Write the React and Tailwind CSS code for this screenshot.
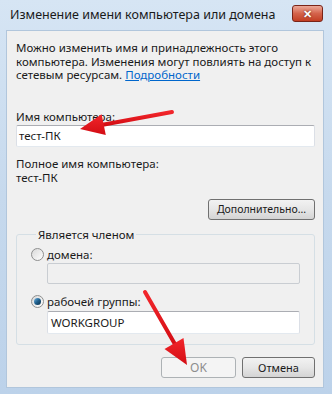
import React from "react";

const font = { fontFamily: '"Noto Sans", "Open Sans", sans-serif' };

const Radio = ({ checked }) => (
  <span className="relative flex h-[13px] w-[13px] items-center justify-center rounded-full border border-[#8e8f8f] bg-gradient-to-br from-[#d9d9d9] to-[#ffffff]">
    {checked && (
      <span className="h-[7px] w-[7px] rounded-full bg-gradient-to-br from-[#6fb6e6] via-[#1e5f8c] to-[#0c2f4a]" />
    )}
  </span>
);

const Button = ({ children, disabled, className = "", size = "text-[11px]" }) => (
  <button
    className={`flex h-[21px] items-center justify-center whitespace-nowrap rounded-[3px] border ${size} ${
      disabled
        ? "border-[#adb2b5] bg-[#f4f4f4] text-[#8d8d8d]"
        : "border-[#707070] bg-gradient-to-b from-[#f2f2f2] via-[#e6e6e6] to-[#d4d4d4] text-[#1a1a1a]"
    } ${className}`}
  >
    {children}
  </button>
);

const Arrows = () => (
  <svg className="pointer-events-none absolute left-0 top-0" width="332" height="394">
    <defs>
      <linearGradient id="ar" x1="0" y1="0" x2="0" y2="1">
        <stop offset="0" stopColor="#f2262b" />
        <stop offset="1" stopColor="#d30d14" />
      </linearGradient>
    </defs>
    <line x1="172" y1="112" x2="100" y2="125.3" stroke="url(#ar)" strokeWidth="4" strokeLinecap="round" />
    <polygon points="80,129 105.8,135 101.6,114.2" fill="url(#ar)" />
    <line x1="145" y1="292" x2="176" y2="346" stroke="url(#ar)" strokeWidth="4" strokeLinecap="round" />
    <polygon points="187,365 183.5,338 164.5,349" fill="url(#ar)" />
  </svg>
);

export default function App() {
  return (
    <div
      style={font}
      className="relative flex h-[394px] w-[332px] flex-col bg-gradient-to-b from-[#d6e5f4] via-[#c6d9ed] to-[#bcd2ea] text-[#1a1a1a]"
    >
      <div className="flex h-[30px] shrink-0 items-center justify-between pl-[10px] pr-[9px]">
        <span className="whitespace-nowrap text-[12.5px] leading-none">
          Изменение имени компьютера или домена
        </span>
        <span className="mb-[3px] flex h-[17px] w-[31px] items-center justify-center rounded-[3px] border border-[#7a2418] bg-gradient-to-b from-[#eba898] via-[#d4634b] to-[#c23e22] text-[11px] font-bold leading-none text-white [text-shadow:0_0_2px_#5a1208]">
          ✕
        </span>
      </div>

      <div className="ml-[6px] mr-[8px] flex flex-1 flex-col border border-[#b1c6dc] bg-[#f0f0f0] pl-[9px] pr-[8px] pt-[10px] text-[11.5px] leading-[13px]">
        <p className="leading-[13.5px]">
          Можно изменить имя и принадлежность этого
          <br />
          компьютера. Изменения могут повлиять на доступ к
          <br />
          сетевым ресурсам.{" "}
          <span className="text-[#0066cc] underline">Подробности</span>
        </p>

        <div className="mt-[28px] leading-[14px]">Имя компьютера:</div>
        <div className="mt-[1px] flex h-[22px] items-center rounded-[2px] border border-[#abadb3] border-b-[#e3e9ef] border-l-[#dbdfe6] border-r-[#dbdfe6] bg-white pl-[2px]">
          тест-ПК
        </div>

        <div className="mt-[10px] leading-[14px]">Полное имя компьютера:</div>
        <div className="leading-[14px]">тест-ПК</div>

        <div className="mt-[14px] flex justify-end">
          <Button className="w-[107px]" size="text-[10.5px]">
            Дополнительно...
          </Button>
        </div>

        <fieldset className="mt-[8px] rounded-[3px] border border-[#d5dfe5] pb-[10px] pl-[14px] pr-[14px]">
          <legend className="ml-[5px] px-[2px] leading-[14px]">Является членом</legend>
          <div className="mt-[6px] flex h-[14px] items-center gap-[3px]">
            <Radio />
            <span>домена:</span>
          </div>
          <div className="ml-[16px] mt-[1px] h-[21px] rounded-[2px] border border-[#c9cdd2] bg-[#f0f0f0]" />
          <div className="mt-[11px] flex h-[14px] items-center gap-[3px]">
            <Radio checked />
            <span>рабочей группы:</span>
          </div>
          <div className="ml-[16px] mt-[2px] flex h-[23px] items-center rounded-[2px] border border-[#abadb3] border-b-[#e3e9ef] border-l-[#dbdfe6] border-r-[#dbdfe6] bg-white pl-[3px]">
            WORKGROUP
          </div>
        </fieldset>

        <div className="mt-[12px] flex justify-end gap-[6px]">
          <Button disabled className="w-[75px]" size="text-[12px]">
            OK
          </Button>
          <Button className="w-[73px]">Отмена</Button>
        </div>
      </div>
      <div className="h-[6px] shrink-0" />
      <Arrows />
    </div>
  );
}
